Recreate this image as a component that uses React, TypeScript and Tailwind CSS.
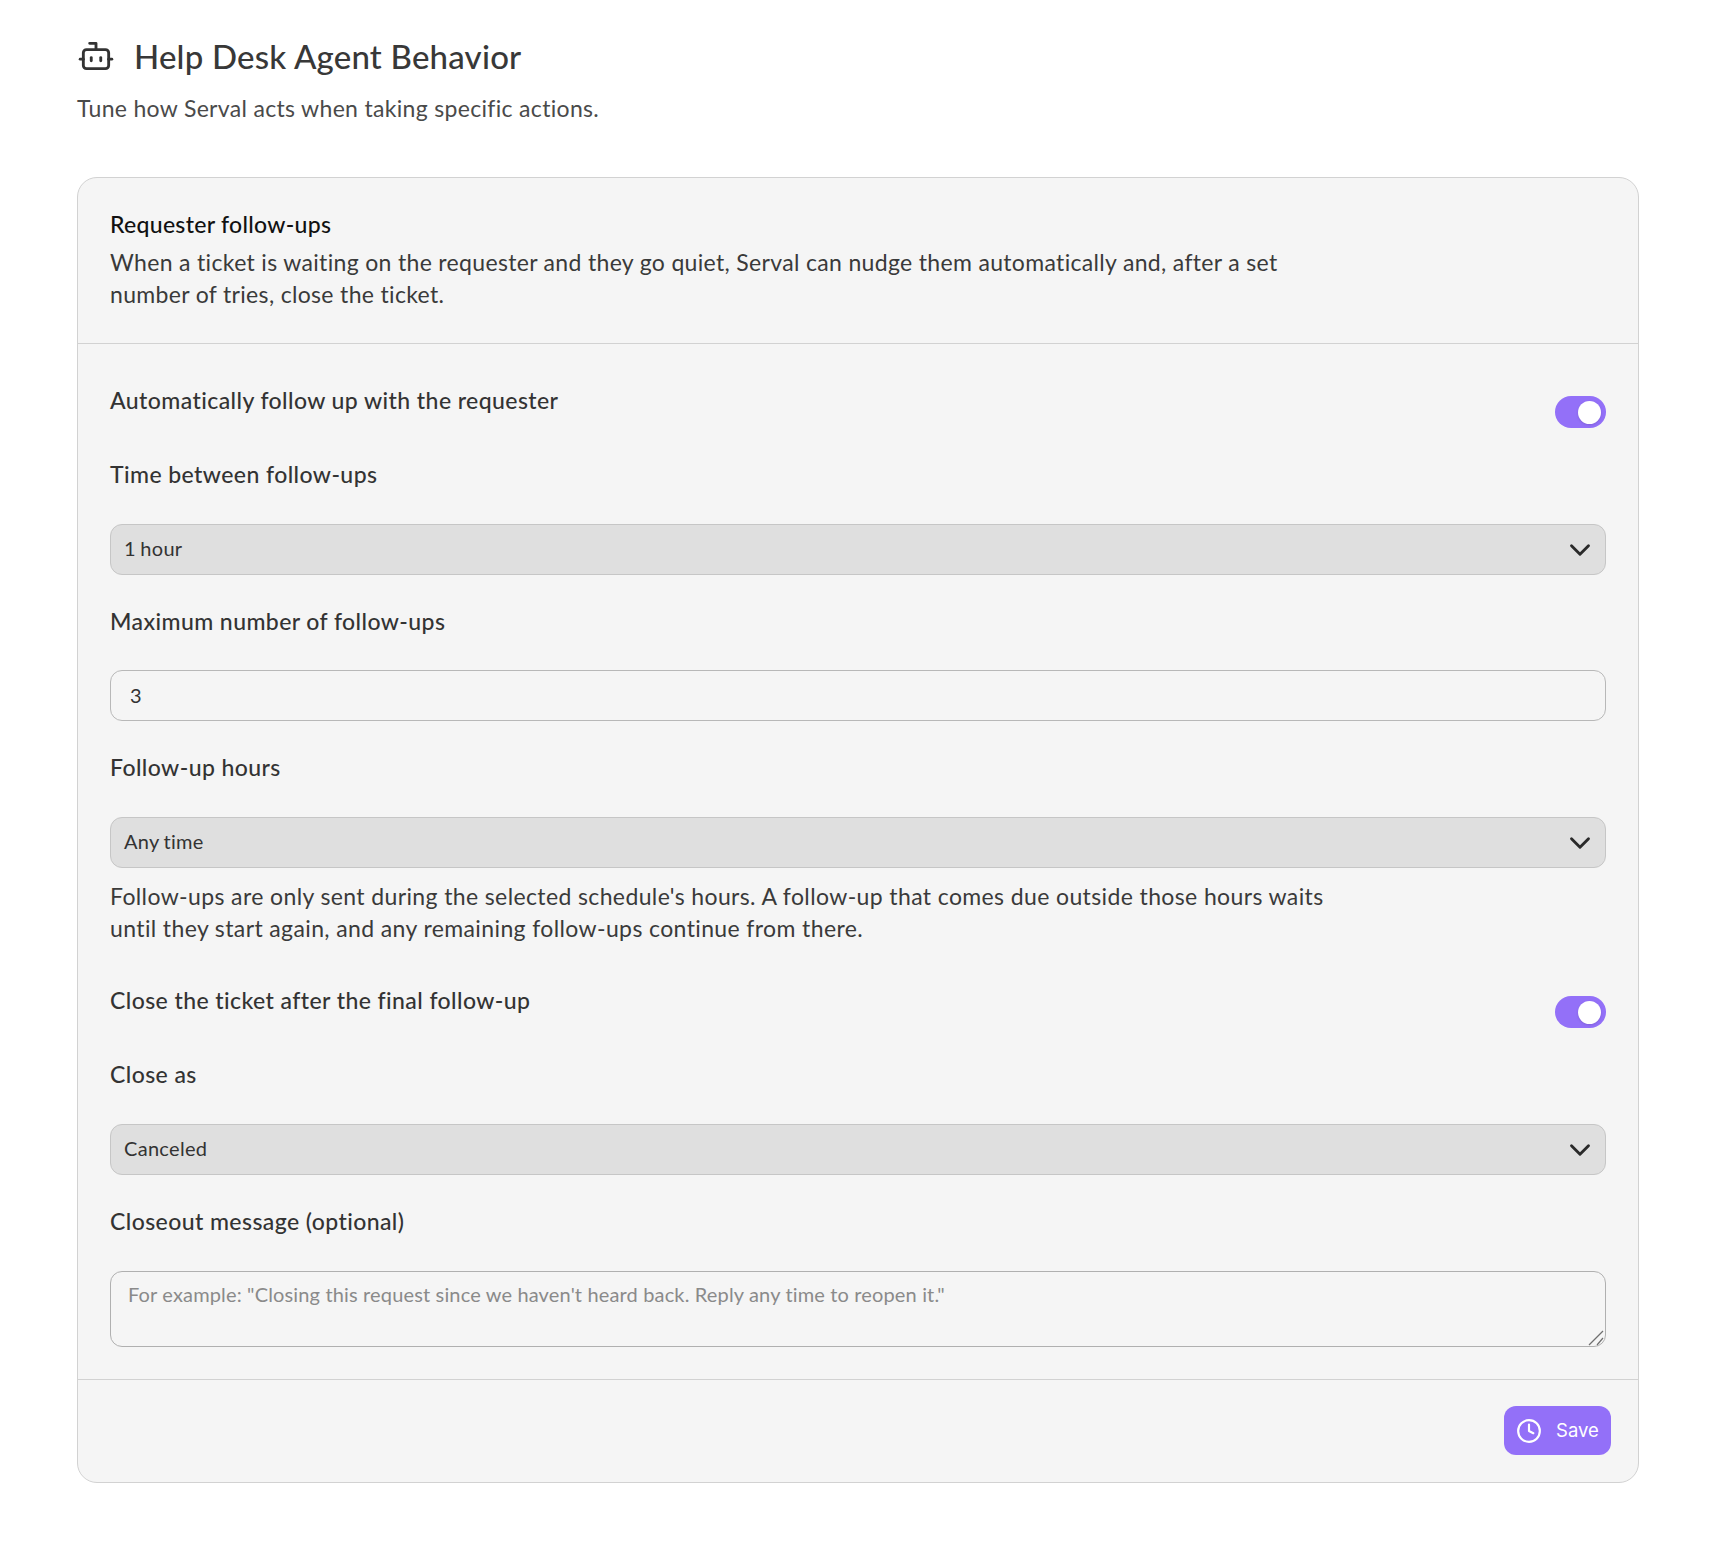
import React from 'react';
import { Bot, ChevronDown, Clock } from 'lucide-react';

const Toggle = () => (
  <div className="w-[51px] h-[32px] rounded-full bg-[#9370f8] flex items-center justify-end pr-[5px] mt-[11px] shrink-0">
    <div className="size-[23px] rounded-full bg-white shadow-sm" />
  </div>
);

const Select = ({ value, className }: { value: string; className: string }) => (
  <div className={`h-[51px] rounded-[12px] border border-[#c6c6c6] bg-[#dfdfdf] flex items-center justify-between pl-[13px] pr-[8px] text-[20px] tracking-[0.3px] [word-spacing:-1px] text-[#333333] ${className}`}>
    <span className="mb-[3px]">{value}</span>
    <ChevronDown className="size-[34px] text-[#2a2a2a]" strokeWidth={2} />
  </div>
);

const Label = ({ children, className }: { children: React.ReactNode; className: string }) => (
  <div className={`text-[23px] leading-[31px] pb-[1px] tracking-[0.42px] font-medium text-[#333333] ${className}`}>{children}</div>
);

export default function App() {
  return (
    <div className="min-h-[1550px] bg-white font-['Lato',sans-serif] pt-[36px] pl-[77px] pr-[93px]">
      {/* Header */}
      <div className="flex items-center gap-[19px] h-[40px]">
        <Bot className="size-[38px] text-[#333333]" strokeWidth={1.8} />
        <h1 className="text-[33px] leading-[40px] tracking-[0.2px] font-medium text-[#383838]">Help Desk Agent Behavior</h1>
      </div>
      <p className="mt-[16px] text-[23px] leading-[32px] tracking-[0.32px] text-[#4a4a4a]">Tune how Serval acts when taking specific actions.</p>

      {/* Card */}
      <div className="mt-[53px] rounded-[20px] border border-[#d2d2d2] bg-[#f5f5f5]">
        <div className="px-[32px] pt-[32px] pb-[33px] border-b border-[#d2d2d2]">
          <h2 className="text-[23px] leading-[28px] tracking-[0.3px] font-medium text-[#111111]">Requester follow-ups</h2>
          <p className="mt-[8px] max-w-[1200px] text-[23px] leading-[32px] tracking-[0.33px] text-[#3a3a3a]">
            When a ticket is waiting on the requester and they go quiet, Serval can nudge them automatically and, after a set number of tries, close the ticket.
          </p>
        </div>

        <div className="px-[32px] pt-[41px] pb-[32px] border-b border-[#d2d2d2]">
          <div className="flex justify-between">
            <Label className="">Automatically follow up with the requester</Label>
            <Toggle />
          </div>
          <Label className="mt-[31px]">Time between follow-ups</Label>
          <Select value="1 hour" className="mt-[33px]" />
          <Label className="mt-[31px]">Maximum number of follow-ups</Label>
          <input
            readOnly
            value="3"
            className="mt-[32px] block w-full h-[51px] rounded-[12px] border border-[#b8b8b8] bg-transparent px-[19px] pb-[2px] text-[20px] text-[#333333] outline-none"
          />
          <Label className="mt-[31px]">Follow-up hours</Label>
          <Select value="Any time" className="mt-[33px]" />
          <p className="mt-[12px] max-w-[1240px] text-[23px] leading-[32px] tracking-[0.38px] text-[#3a3a3a]">
            Follow-ups are only sent during the selected schedule's hours. A follow-up that comes due outside those hours waits until they start again, and any remaining follow-ups continue from there.
          </p>
          <div className="mt-[41px] flex justify-between">
            <Label className="">Close the ticket after the final follow-up</Label>
            <Toggle />
          </div>
          <Label className="mt-[31px]">Close as</Label>
          <Select value="Canceled" className="mt-[33px]" />
          <Label className="mt-[31px]">Closeout message (optional)</Label>
          <div className="relative mt-[33px]">
            <textarea
              rows={2}
              placeholder={'For example: "Closing this request since we haven\'t heard back. Reply any time to reopen it."'}
              className="block w-full h-[76px] resize-none rounded-[12px] border border-[#b0b0b0] bg-transparent px-[17px] py-[7px] text-[20px] tracking-[0.15px] text-[#333333] placeholder:text-[#8a8a8a] outline-none"
            />
            <svg className="absolute right-[2px] bottom-[1px] size-[16px]" viewBox="0 0 16 16" fill="none" stroke="#6f6f6f" strokeWidth="1.2">
              <path d="M1 15 15 1" />
              <path d="M9 15 15 8" />
            </svg>
          </div>
        </div>

        <div className="flex justify-end pt-[26px] pr-[27px] pb-[27px]">
          <button className="h-[49px] w-[107px] rounded-[12px] bg-[#9370f8] flex items-center justify-center gap-[14px] text-white text-[18.5px] font-['Inter',sans-serif]">
            <Clock className="size-[26px]" strokeWidth={2} />
            <span>Save</span>
          </button>
        </div>
      </div>
    </div>
  );
}
